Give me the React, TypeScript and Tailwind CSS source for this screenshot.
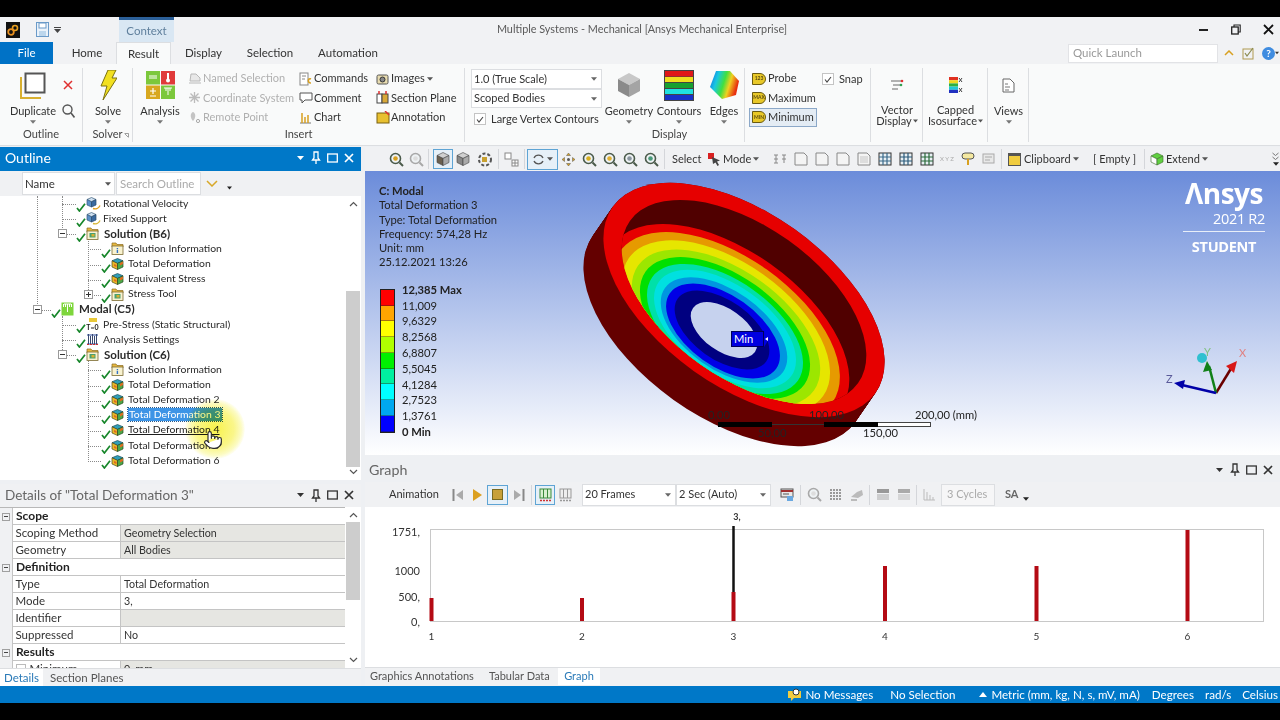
import React from "react";
import { Pointer } from "lucide-react";

const Caret = ({ c = "#555", w = 7 }: { c?: string; w?: number }) => (
  <svg width={w} height={4} viewBox="0 0 7 4" className="shrink-0"><path d="M0 0h7L3.5 4z" fill={c} /></svg>
);

const Check = () => (
  <svg width={10} height={9} viewBox="0 0 10 9" className="shrink-0 self-end mb-[-1px]"><path d="M1 5 L3.4 8 L9 .8" stroke="#17862a" strokeWidth={1.7} fill="none" /></svg>
);

const Cube = () => (
  <svg width={13} height={12} viewBox="0 0 13 12" className="shrink-0">
    <path d="M6.5 .5 12 2.8 6.5 5.4 1 2.8z" fill="#2f9fb8" stroke="#1d4a5a" strokeWidth=".7" />
    <path d="M1 2.8 6.5 5.4V11.5L1 9z" fill="#e8b828" stroke="#4a4a20" strokeWidth=".7" />
    <path d="M12 2.8 6.5 5.4V11.5L12 9z" fill="#4aa848" stroke="#2a4a20" strokeWidth=".7" />
    <path d="M9 5 12 3.5V6L9 7.5zM3 6 5.5 7V9L3 8z" fill="#e06a20" />
  </svg>
);

const Folder = ({ inner }: { inner: React.ReactNode }) => (
  <svg width={13} height={13} viewBox="0 0 13 13" className="shrink-0">
    <path d="M1 1h4l1 1.5h6V5H1z" fill="#e8b840" stroke="#8a6a20" strokeWidth=".7" />
    <rect x="1" y="4" width="11" height="8.5" fill="#f8f2d0" stroke="#7a6a30" strokeWidth=".8" />
    {inner}
  </svg>
);
const SolIcon = () => (
  <Folder inner={<><rect x="3.5" y="6" width="6" height="4.5" fill="#4aa070" /><rect x="5.5" y="7" width="3" height="2.5" fill="#d8b030" /></>} />
);
const InfoIcon = () => (
  <Folder inner={<><rect x="5.7" y="6" width="1.4" height="1.3" fill="#3070c8" /><rect x="5.7" y="8" width="1.4" height="3" fill="#3070c8" /></>} />
);
const RotIcon = ({ bottom = "#e0a020" }: { bottom?: string }) => (
  <svg width={15} height={13} viewBox="0 0 15 13" className="shrink-0 mr-[-2px]">
    <path d="M5.5 .5 10 2.5 5.5 4.8 1 2.5z" fill="#cfe0f0" stroke="#3a5a7a" strokeWidth=".7" />
    <path d="M1 2.5 5.5 4.8V10L1 8z" fill="#5a90c8" stroke="#3a5a7a" strokeWidth=".7" />
    <path d="M10 2.5 5.5 4.8V10L10 8z" fill="#3a6aa0" stroke="#2a4a6a" strokeWidth=".7" />
    <path d="M7 11.5c3 .8 6-.5 7-3" stroke={bottom} strokeWidth="1.4" fill="none" />
  </svg>
);
const PreIcon = () => (
  <span className="shrink-0 w-[13px] h-[13px] relative flex items-end justify-center text-[7px] leading-[7px] font-bold text-[#222]">
    <span className="absolute left-[3px] top-0 w-[8px] h-[4px] bg-[#e8c838]" />T=0
  </span>
);
const SettingsIcon = () => (
  <svg width={13} height={13} viewBox="0 0 13 13" className="shrink-0">
    <path d="M1 2h11M1 11h11" stroke="#2a4aa0" strokeWidth="1" />
    <path d="M2.5 1v10M6.5 1v10M10.5 1v10M4.5 3v8M8.5 3v8" stroke="#3a4a70" strokeWidth="1" />
    <path d="M1 11.5h11" stroke="#d03030" strokeWidth="1.2" strokeDasharray="2 1" />
  </svg>
);
const ModalIcon = () => (
  <svg width={13} height={14} viewBox="0 0 13 14" className="shrink-0">
    <rect x=".5" y=".5" width="12" height="13" fill="#7ed63c" />
    <path d="M2.5 2v3M4.5 2v3M6.5 2v8M8.5 2v3M10.5 2v3M3 2h7" stroke="#fff" strokeWidth="1" />
  </svg>
);

const levelPl = ["pl-[51px]", "pl-[76px]", "pl-[101px]"];
const connector = ["left-[37px] w-[14px]", "left-[62px] w-[14px]", "left-[88px] w-[13px]"];
const expander = ["left-[33px]", "left-[58px]", "left-[84px]"];

function Row({ level, icon, label, bold, exp, sel, hover }: { level: number; icon: React.ReactNode; label: string; bold?: boolean; exp?: string; sel?: boolean; hover?: boolean }) {
  return (
    <div className={`relative flex h-[15.125px] items-center whitespace-nowrap ${levelPl[level]}`}>
      <span className={`absolute top-[8px] border-t border-dotted border-[#8a8a8a] ${connector[level]}`} />
      {exp && (
        <span className={`absolute top-[3px] flex h-[9px] w-[9px] items-center justify-center border border-[#9a9a9a] bg-white text-[9px] leading-[7px] text-[#333] ${expander[level]}`}>
          {exp === "-" ? <span className="h-px w-[5px] bg-[#333]" /> : <span className="relative h-px w-[5px] bg-[#333]"><span className="absolute left-[2px] top-[-2px] h-[5px] w-px bg-[#333]" /></span>}
        </span>
      )}
      <Check />
      {icon}
      <span
        className={
          "-mt-px leading-[13px] " +
          (bold ? "ml-[5px] text-[11.5px] font-bold " : "ml-[4px] text-[10.4px] ") +
          (sel ? "bg-[#3d94e6] text-white outline outline-dotted outline-[#2a5a8a] px-px -mx-px " : "") +
          (hover ? "underline text-[#1c1c1c] " : "")
        }
      >
        {label}
      </span>
    </div>
  );
}

function Tree() {
  return (
    <div className="relative flex-1 overflow-hidden bg-white text-[#2a2a2a]">
      <span className="absolute left-[37px] top-0 h-[108px] border-l border-dotted border-[#8a8a8a]" />
      <span className="absolute left-[62px] top-0 h-[34px] border-l border-dotted border-[#8a8a8a]" />
      <span className="absolute left-[88px] top-[38px] h-[60px] border-l border-dotted border-[#8a8a8a]" />
      <span className="absolute left-[62px] top-[120px] h-[34px] border-l border-dotted border-[#8a8a8a]" />
      <span className="absolute left-[88px] top-[162px] h-[102px] border-l border-dotted border-[#8a8a8a]" />
      <Row level={1} icon={<RotIcon />} label="Rotational Velocity" />
      <Row level={1} icon={<RotIcon bottom="#d8b838" />} label="Fixed Support" />
      <Row level={1} exp="-" icon={<SolIcon />} label="Solution (B6)" bold />
      <Row level={2} icon={<InfoIcon />} label="Solution Information" />
      <Row level={2} icon={<Cube />} label="Total Deformation" />
      <Row level={2} icon={<Cube />} label="Equivalent Stress" />
      <Row level={2} exp="+" icon={<SolIcon />} label="Stress Tool" />
      <Row level={0} exp="-" icon={<ModalIcon />} label="Modal (C5)" bold />
      <Row level={1} icon={<PreIcon />} label="Pre-Stress (Static Structural)" />
      <Row level={1} icon={<SettingsIcon />} label="Analysis Settings" />
      <Row level={1} exp="-" icon={<SolIcon />} label="Solution (C6)" bold />
      <Row level={2} icon={<InfoIcon />} label="Solution Information" />
      <Row level={2} icon={<Cube />} label="Total Deformation" />
      <Row level={2} icon={<Cube />} label="Total Deformation 2" />
      <Row level={2} icon={<Cube />} label="Total Deformation 3" sel />
      <Row level={2} icon={<Cube />} label="Total Deformation 4" hover />
      <Row level={2} icon={<Cube />} label="Total Deformation 5" />
      <Row level={2} icon={<Cube />} label="Total Deformation 6" />
      <span className="pointer-events-none absolute left-[185px] top-[203px] h-[60px] w-[60px] rounded-full bg-[radial-gradient(circle,#f8f24a_0%,#faf68a_45%,#fcfbc4_62%,transparent_72%)] mix-blend-multiply" />
      <Pointer className="absolute left-[203px] top-[234px]" size={20} fill="#fff" stroke="#2a2a2a" strokeWidth={1.4} />
    </div>
  );
}

const PanelBtns = ({ c }: { c: string }) => (
  <div className="ml-[4px] flex items-center gap-[6px]" style={{ color: c }}>
    <Caret c={c} w={9} />
    <svg width={10} height={13} viewBox="0 0 10 13"><path d="M3 1h4v6l1.5 2h-7L3 7zM5 9v4" fill="none" stroke={c} strokeWidth="1.3" /></svg>
    <svg width={11} height={10} viewBox="0 0 11 10"><rect x=".7" y="1" width="9.6" height="8" fill="none" stroke={c} strokeWidth="1.3" /></svg>
    <svg width={10} height={10} viewBox="0 0 10 10"><path d="M1 1l8 8M9 1l-8 8" stroke={c} strokeWidth="1.7" /></svg>
  </div>
);

const Dots = ({ white }: { white?: boolean }) => (
  <div className={"ml-[6px] h-[7px] flex-1 bg-[length:2px_2px] " + (white ? "bg-[radial-gradient(#ffffff80_0.6px,transparent_0.7px)]" : "bg-[radial-gradient(#a8acb2_0.6px,transparent_0.7px)]")} />
);

function ScrollBar({ top, h }: { top: string; h: string }) {
  return (
    <div className="flex h-full w-[16px] shrink-0 flex-col items-center bg-white">
      <svg width={9} height={6} viewBox="0 0 9 6" className="mt-[5px]"><path d="M1 5l3.5-3.5L8 5" stroke="#555" strokeWidth="1.2" fill="none" /></svg>
      <div className="relative w-full flex-1">
        <div className={"absolute left-px right-px bg-[#cdcdcd] " + top + " " + h} />
      </div>
      <svg width={9} height={6} viewBox="0 0 9 6" className="mb-[5px]"><path d="M1 1l3.5 3.5L8 1" stroke="#555" strokeWidth="1.2" fill="none" /></svg>
    </div>
  );
}

function DRow({ name, value, head, grey, box }: { name: string; value?: string; head?: boolean; grey?: boolean; box?: boolean }) {
  if (head)
    return (
      <div className="flex h-[17px] shrink-0 items-center">
        <span className="flex w-[12px] justify-center">
          <span className="flex h-[8px] w-[8px] items-center justify-center border border-[#a0a0a0]"><span className="h-px w-[4px] bg-[#444]" /></span>
        </span>
        <div className="flex h-full flex-1 items-center border-b border-l border-[#c4c4c4] bg-white pl-[3px] text-[12px] font-bold text-[#222]">{name}</div>
      </div>
    );
  return (
    <div className="flex h-[17px] shrink-0 items-stretch pl-[12px]">
      <div className="flex w-[108px] items-center border-b border-l border-[#c4c4c4] bg-white pl-[2.5px] text-[11.5px]">
        {box && <span className="mr-[4px] h-[10px] w-[10px] shrink-0 border border-[#bbb]" />}
        {name}
      </div>
      <div className={"flex flex-1 items-center border-b border-l border-[#c4c4c4] pl-[3px] pt-px text-[10.7px] " + (grey ? "bg-[#e6e6e2]" : "bg-white")}>{value}</div>
    </div>
  );
}

function Details() {
  return (
    <div className="flex h-[161px] w-[361px] bg-[#f0f1f3] text-[#333]">
      <div className="flex h-full w-[345px] flex-col overflow-hidden border-t border-[#b8b8b8] pr-0">
        <DRow name="Scope" head />
        <DRow name="Scoping Method" value="Geometry Selection" grey />
        <DRow name="Geometry" value="All Bodies" grey />
        <DRow name="Definition" head />
        <DRow name="Type" value="Total Deformation" />
        <DRow name="Mode" value="3," />
        <DRow name="Identifier" value="" grey />
        <DRow name="Suppressed" value="No" />
        <DRow name="Results" head />
        <DRow name="Minimum" value="0, mm" grey box />
      </div>
      <ScrollBar top="top-[4px]" h="h-[78px]" />
    </div>
  );
}

const Big = ({ icon, label, caret = true, w }: { icon: React.ReactNode; label: React.ReactNode; caret?: boolean; w: string }) => (
  <div className={"flex shrink-0 flex-col items-center " + w}>
    <div className="flex h-[34px] items-center justify-center">{icon}</div>
    <div className="mt-[2px] whitespace-nowrap text-center leading-[14px]">{label}</div>
    {caret && <div className="mt-[2px]"><Caret w={6} c="#777" /></div>}
  </div>
);

const Group = ({ w, label, children }: { w: string; label?: React.ReactNode; children: React.ReactNode }) => (
  <div className={"flex h-[74px] shrink-0 flex-col border-r border-[#dcdee1] " + w}>
    <div className="flex h-[59px]">{children}</div>
    {label && <div className="text-center leading-[13px] text-[#444]">{label}</div>}
  </div>
);

const RItem = ({ icon, label, grey }: { icon: React.ReactNode; label: React.ReactNode; grey?: boolean }) => (
  <div className={"flex h-[20px] items-center gap-[1px] whitespace-nowrap " + (grey ? "text-[#b0b0b0]" : "")}>
    <span className="flex w-[15px] justify-center">{icon}</span>
    {label}
  </div>
);

const Dropdown = ({ label, w, h = "h-[19px]" }: { label: string; w: string; h?: string }) => (
  <div className={"flex items-center justify-between border border-[#dcdee1] bg-white pl-[2px] pr-[4px] whitespace-nowrap " + w + " " + h}>
    <span>{label}</span>
    <Caret w={6} c="#666" />
  </div>
);

const CheckBox = ({ size = "h-[12px] w-[12px]" }: { size?: string }) => (
  <span className={"flex shrink-0 items-center justify-center border border-[#c4c4c4] bg-white " + size}>
    <svg width={8} height={7} viewBox="0 0 8 7"><path d="M1 3.5l2 2.5L7 1" stroke="#444" strokeWidth="1.1" fill="none" /></svg>
  </span>
);

const PBadge = ({ t }: { t: string }) => (
  <span className="flex h-[12px] w-[14px] items-center justify-center rounded-r-full border border-[#6a5a10] bg-[#e8c828] text-[5px] font-bold leading-none text-[#5a4a10]">{t}</span>
);

function Ribbon() {
  return (
    <div className="flex h-[82px] shrink-0 border-b border-[#dcdee1] bg-[#f9fafa] pt-[4px] text-[#333]">
      <Group w="w-[83px]" label="Outline">
        <Big
          w="ml-[5px] w-[56px]"
          label="Duplicate"
          icon={
            <svg width={26} height={27} viewBox="0 0 26 27">
              <path d="M1 5v21h20" fill="none" stroke="#d8b030" strokeWidth="2" />
              <rect x="5.5" y="1.5" width="19" height="19" fill="#fff" stroke="#555" strokeWidth="2" />
            </svg>
          }
        />
        <div className="flex w-[14px] flex-col items-center">
          <div className="flex h-[34px] items-center">
            <svg width={10} height={10} viewBox="0 0 10 10"><path d="M1 1l8 8M9 1l-8 8" stroke="#e03030" strokeWidth="1.5" /></svg>
          </div>
          <svg className="mt-[2px]" width={13} height={14} viewBox="0 0 13 14"><circle cx="5.5" cy="5.5" r="4.5" fill="none" stroke="#555" strokeWidth="1.4" /><path d="M9 9l3.5 4.5" stroke="#555" strokeWidth="1.6" /></svg>
        </div>
      </Group>
      <Group
        w="w-[50px]"
        label={
          <span className="flex items-center justify-center gap-px pl-[6px]">
            Solver
            <svg width={5} height={5} viewBox="0 0 5 5" className="mt-[3px]"><path d="M.5 .5h4v4M1 1l3 3" stroke="#777" fill="none" strokeWidth=".7" /></svg>
          </span>
        }
      >
        <Big
          w="w-[50px]"
          label="Solve"
          icon={<svg width={17} height={30} viewBox="0 0 17 30"><path d="M8 0h8l-4 8h5L3 30l4-14H1z" fill="#f2e020" stroke="#7a7010" strokeWidth="1" /></svg>}
        />
      </Group>
      <Group w="w-[332px]" label="Insert">
        <Big
          w="w-[54px]"
          label="Analysis"
          icon={
            <svg width={29} height={28} viewBox="0 0 29 28">
              <rect width="14" height="13.500" fill="#7cc83c" />
              <rect x="15" width="14" height="13.500" fill="#e03a3a" />
              <rect y="14.500" width="14" height="13.500" fill="#d8a820" />
              <rect x="15" y="14.500" width="14" height="13.500" fill="#7cc83c" />
              <path d="M3 5h8M3 7h8" stroke="#fff" strokeWidth="1" />
              <path d="M22 2v7" stroke="#fff" strokeWidth="2" />
              <circle cx="22" cy="9.500" r="2" fill="#fff" />
              <path d="M7 17v6M4 20h6M4 25h6" stroke="#fff" strokeWidth="1.200" />
              <path d="M18 17h8M20 17v3M22 17v7M24 17v3" stroke="#fff" strokeWidth="1" />
            </svg>
          }
        />
        <div className="mt-px flex w-[111px] flex-col">
          <RItem grey label="Named Selection" icon={<svg width={14} height={13} viewBox="0 0 14 13"><path d="M3 2h5l4 4v3H2zM1 11h12" stroke="#b8b8b8" fill="#e8e8e8" /></svg>} />
          <RItem grey label="Coordinate System" icon={<svg width={13} height={13} viewBox="0 0 13 13"><path d="M6.500 1v11M1 6.500h11M2.500 2.500l8 8M10.500 2.500l-8 8" stroke="#bbb" strokeWidth="1.3" /></svg>} />
          <RItem grey label="Remote Point" icon={<svg width={13} height={13} viewBox="0 0 13 13"><path d="M5 1c3 1 3 6 0 9-3-3-3-8 0-9z" fill="#c4c4c4" /><circle cx="10" cy="10" r="1.600" fill="none" stroke="#aaa" /></svg>} />
        </div>
        <div className="mt-px flex w-[77px] flex-col">
          <RItem label="Commands" icon={<svg width={13} height={14} viewBox="0 0 13 14"><rect x="1" y="1" width="8" height="12" fill="#fff" stroke="#888" /><path d="M3 4h4M3 7h3" stroke="#888" /><path d="M12 7c-3-1.500-4 4 0 4" stroke="#d8a020" strokeWidth="1.600" fill="none" /></svg>} />
          <RItem label="Comment" icon={<svg width={14} height={13} viewBox="0 0 14 13"><path d="M1 2h12v7H6l-3 3V9H1z" fill="#fff" stroke="#555" /></svg>} />
          <RItem label="Chart" icon={<svg width={13} height={13} viewBox="0 0 13 13"><path d="M1 12h11" stroke="#777" /><path d="M3 12V2M6 12V6M9 12V4" stroke="#d8a020" strokeWidth="1.500" /></svg>} />
        </div>
        <div className="mt-px flex flex-col">
          <RItem label={<span className="flex items-center gap-[2px]">Images<Caret w={6} /></span>} icon={<svg width={13} height={12} viewBox="0 0 13 12"><rect x="1" y="2" width="11" height="9" rx="1.500" fill="#e8dcb0" stroke="#555" /><circle cx="6.500" cy="6.500" r="2.500" fill="#888" stroke="#333" /></svg>} />
          <RItem label="Section Plane" icon={<svg width={13} height={13} viewBox="0 0 13 13"><rect x="1" y="3" width="5" height="9" fill="#fff" stroke="#444" /><rect x="6" y="3" width="6" height="9" fill="#d8a838" stroke="#444" /><path d="M3 0v3M10 0v3" stroke="#e03030" strokeWidth="1.500" /></svg>} />
          <RItem label="Annotation" icon={<svg width={14} height={13} viewBox="0 0 14 13"><rect x="1" y="2" width="12" height="10" fill="#e8c030" stroke="#7a6010" /><path d="M9 0l4 4" stroke="#e03030" strokeWidth="1.500" /></svg>} />
        </div>
      </Group>
      <div className="flex h-[74px] w-[280px] shrink-0 border-r border-[#dcdee1]">
        <div className="ml-[6px] mt-px flex w-[134px] flex-col">
          <Dropdown label="1.0 (True Scale)" w="w-[131px]" h="h-[20px]" />
          <Dropdown label="Scoped Bodies" w="w-[131px]" />
          <div className="mt-[1px] flex h-[20px] items-center gap-[5px] whitespace-nowrap pl-[3px]"><CheckBox />Large Vertex Contours</div>
        </div>
        <div className="flex flex-col">
          <div className="flex h-[59px]">
            <Big
              w="w-[50px]"
              label="Geometry"
              icon={<svg width={24} height={26} viewBox="0 0 24 26"><path d="M12 1 23 7 12 13 1 7z" fill="#c8c8c8" /><path d="M1 7l11 6v12L1 19z" fill="#8a8a8a" /><path d="M23 7 12 13v12l11-6z" fill="#a4a4a4" /></svg>}
            />
            <Big
              w="w-[50px]"
              label="Contours"
              icon={
                <svg width={30} height={31} viewBox="0 0 30 31">
                  <rect width="30" height="31" fill="#444" />
                  <rect x="1" y="1" width="28" height="5.500" fill="#e01818" />
                  <rect x="1" y="7" width="28" height="5" fill="#f0e020" />
                  <rect x="1" y="13" width="28" height="5" fill="#18a030" />
                  <rect x="1" y="19" width="28" height="5" fill="#20e0e0" />
                  <rect x="1" y="25" width="28" height="5" fill="#1830c8" />
                </svg>
              }
            />
            <Big
              w="w-[40px]"
              label="Edges"
              icon={
                <svg width={30} height={28} viewBox="0 0 30 28">
                  <defs><linearGradient id="eg" x1="0" x2="1" y1="0" y2=".3"><stop offset="0" stopColor="#1060e8" /><stop offset=".3" stopColor="#18c8e0" /><stop offset=".55" stopColor="#40e040" /><stop offset=".75" stopColor="#f0d020" /><stop offset="1" stopColor="#e83010" /></linearGradient></defs>
                  <path d="M7 0h14l9 10-3 14-14 4L1 16z" fill="url(#eg)" />
                </svg>
              }
            />
          </div>
          <div className="pr-[9px] text-center leading-[13px] text-[#444]">Display</div>
        </div>
      </div>
      <Group w="w-[126px]">
        <div className="ml-[4px] mt-px flex w-[68px] flex-col">
          <div className="flex h-[20px] items-center gap-[2px] pl-[3px]"><PBadge t="123" />Probe</div>
          <div className="flex h-[20px] items-center gap-[2px] pl-[3px]"><PBadge t="MAX" />Maximum</div>
          <div className="flex h-[20px] items-center gap-[2px] whitespace-nowrap border border-[#8ca8c8] bg-[#e4ecf4] pl-[2px]"><PBadge t="MIN" />Minimum</div>
        </div>
        <div className="ml-[5px] mt-px flex h-[20px] items-center gap-[5px]"><CheckBox />Snap</div>
      </Group>
      <Group w="w-[52px]">
        <Big
          w="w-[52px]"
          caret={false}
          label={<><div className="leading-[12px]">Vector</div><div className="flex items-center justify-center gap-[1px] leading-[10px]">Display<Caret w={5} /></div></>}
          icon={<svg width={14} height={12} viewBox="0 0 14 12"><path d="M1 2h11M3 6h8M2 10h6" stroke="#999" strokeWidth="1.300" /><circle cx="12" cy="2" r="1.300" fill="#e03030" /><circle cx="11" cy="6" r="1.300" fill="#30a050" /></svg>}
        />
      </Group>
      <Group w="w-[65px]">
        <Big
          w="w-[65px]"
          caret={false}
          label={<><div className="leading-[12px]">Capped</div><div className="flex items-center justify-center gap-[1px] leading-[10px]">Isosurface<Caret w={5} /></div></>}
          icon={<svg width={14} height={16} viewBox="0 0 14 16"><rect width="9" height="3.200" fill="#e03020" /><rect y="3.200" width="9" height="3.200" fill="#f0d820" /><rect y="6.400" width="9" height="3.200" fill="#30b040" /><rect y="9.600" width="9" height="3.200" fill="#20c8d8" /><rect y="12.800" width="9" height="3.200" fill="#2030c0" /><path d="M10 1l3 4M13 1l-3 4M10 11l3 4M13 11l-3 4" stroke="#444" /></svg>}
        />
      </Group>
      <Group w="w-[41px]">
        <Big
          w="w-[41px]"
          label="Views"
          icon={<svg width={13} height={15} viewBox="0 0 13 15"><path d="M1 1h7l4 4v9H1z" fill="#fff" stroke="#666" /><path d="M3 6h3M3 9h5M3 12h4" stroke="#777" /></svg>}
        />
      </Group>
    </div>
  );
}

const Tb = ({ children, w = "w-[21px]", active }: { children?: React.ReactNode; w?: string; active?: boolean }) => (
  <span className={"flex h-[20px] shrink-0 items-center justify-center " + w + (active ? " border border-[#5ea4d4] bg-[#e6f0f8]" : "")}>{children}</span>
);
const Sep = () => <span className="mx-[2px] h-[20px] w-px shrink-0 bg-[#d4d6da]" />;
const Mag = ({ c = "#d8a020", g }: { c?: string; g?: boolean }) => (
  <svg width={15} height={15} viewBox="0 0 15 15"><circle cx="6.500" cy="6.500" r="5" fill="#eef2f4" stroke={g ? "#a8a8a8" : "#4a5a4a"} strokeWidth="1.600" /><circle cx="6.500" cy="6.500" r="2.300" fill={g ? "#ddd" : c} /><path d="M10.500 10.500l3.500 3.500" stroke={g ? "#a8a8a8" : "#4a5a4a"} strokeWidth="2" /></svg>
);
const SmallCube = ({ c = "#888", o = "#444" }: { c?: string; o?: string }) => (
  <svg width={14} height={14} viewBox="0 0 14 14"><path d="M7 .5 13 3.500 7 6.500 1 3.500z" fill="#d0d0d0" stroke={o} strokeWidth=".6" /><path d="M1 3.500 7 6.500V13.500L1 10.500z" fill={c} stroke={o} strokeWidth=".6" /><path d="M13 3.500 7 6.500V13.500L13 10.500z" fill="#aaa" stroke={o} strokeWidth=".6" /></svg>
);
const Page = ({ c = "#c8c8c8", o = "#888" }: { c?: string; o?: string }) => (
  <svg width={14} height={14} viewBox="0 0 14 14"><path d="M1 1h9l3 3v9H1z" fill="#f4f4f4" stroke={o} /><rect x="3" y="4" width="8" height="7" fill={c} /></svg>
);
const Grid = ({ c = "#3a6a8a" }: { c?: string }) => (
  <svg width={14} height={14} viewBox="0 0 14 14"><rect x="1" y="1" width="12" height="12" fill="#e8f0f4" stroke="#333" /><path d="M1 5h12M1 9h12M5 1v12M9 1v12" stroke={c} strokeWidth="1.200" /></svg>
);

function ViewToolbar() {
  return (
    <div className="flex h-[24px] shrink-0 items-center whitespace-nowrap bg-[#f0f1f3] text-[#333]">
      <span className="ml-[10px] mr-[8px] h-[18px] w-[3px] bg-[radial-gradient(#a8acb2_0.6px,transparent_0.7px)] bg-[length:2px_2px]" />
      <Tb w="w-[20px]"><Mag /></Tb>
      <Tb w="w-[20px]"><Mag g /></Tb>
      <Sep />
      <span className="w-[2px]" />
      <Tb w="w-[20px]" active><SmallCube c="#6a6050" /></Tb>
      <Tb w="w-[20px]"><SmallCube /></Tb>
      <Tb w="w-[23px]"><svg width={16} height={15} viewBox="0 0 16 15"><circle cx="8" cy="7.500" r="6" fill="none" stroke="#555" strokeDasharray="3 2" strokeWidth="2" /><rect x="5" y="5" width="5" height="5" fill="#c8a030" /></svg></Tb>
      <Sep />
      <Tb><svg width={15} height={15} viewBox="0 0 15 15"><rect x="1" y="1" width="6" height="6" fill="#fff" stroke="#888" /><rect x="8" y="8" width="6" height="6" fill="#fff" stroke="#888" /><path d="M11 8v6M8 11h6" stroke="#888" /></svg></Tb>
      <Sep />
      <span className="flex h-[21px] w-[31px] shrink-0 items-center justify-center gap-[2px] border border-[#5ea4d4] bg-[#e6f0f8]">
        <svg width={13} height={13} viewBox="0 0 13 13"><path d="M2 5a5 5 0 0 1 9 0M11 8a5 5 0 0 1-9 0" fill="none" stroke="#555" strokeWidth="1.300" /></svg>
        <Caret w={6} />
      </span>
      <Tb><svg width={15} height={15} viewBox="0 0 15 15"><path d="M7.500 1l2 2.500h-4zM7.500 14l2-2.500h-4zM1 7.500l2.500-2v4zM14 7.500l-2.500-2v4z" fill="#d8a020" stroke="#555" strokeWidth=".5" /><circle cx="7.500" cy="7.500" r="1.500" fill="#555" /></svg></Tb>
      <Tb w="w-[21px]"><Mag c="#d8b020" /></Tb>
      <Tb w="w-[20.5px]"><Mag c="#e0b030" /></Tb>
      <Tb w="w-[20.5px]"><Mag c="#8a96a0" /></Tb>
      <Tb w="w-[21px]"><Mag c="#4a9a7a" /></Tb>
      <Sep />
      <span className="ml-[5px] w-[35px]">Select</span>
      <span className="flex w-[14px] items-center">
        <svg width={14} height={13} viewBox="0 0 14 13"><rect x="1" y="0" width="6" height="6" fill="#d82020" /><path d="M5 4l8 3.500-3 1 2 3.500-1.500 1-2-3.500L6 11z" fill="#444" /></svg>
      </span>
      <span className="ml-[2px] flex w-[46px] items-center gap-[2px]">Mode<Caret w={6} /></span>
      <Tb><svg width={14} height={13} viewBox="0 0 14 13"><path d="M1 2h4M1 6h4M1 10h4M9 2h4M9 6h4M3 2v8M11 2v8" stroke="#888" /></svg></Tb>
      <Tb><Page c="#f4f4f4" /></Tb>
      <Tb><Page c="#f4f4f4" /></Tb>
      <Tb><Page c="#f4f4f4" /></Tb>
      <Tb><Page c="#ddd" /></Tb>
      <Tb><Grid /></Tb>
      <Tb><Grid c="#2a5a7a" /></Tb>
      <Tb><Grid c="#2a6a3a" /></Tb>
      <Tb w="w-[20px]"><span className="text-[6px] leading-none text-[#aaa]">X Y Z</span></Tb>
      <Tb><svg width={14} height={14} viewBox="0 0 14 14"><rect x="1" y="1" width="12" height="6" rx="3" fill="#f4e8a0" stroke="#555" /><path d="M7 7v6" stroke="#d8a020" strokeWidth="2" /></svg></Tb>
      <Tb><svg width={14} height={14} viewBox="0 0 14 14"><rect x="1" y="2" width="11" height="9" fill="#e8e8e8" stroke="#aaa" /><path d="M3 5h7M3 8h5" stroke="#aaa" /></svg></Tb>
      <Sep />
      <span className="ml-[4px] mr-[3px] h-[13px] w-[13px] shrink-0 border border-[#555] border-t-[3px] bg-[#f0cc40]" />
      <span className="flex w-[57px] items-center gap-[2px]">Clipboard<Caret w={6} /></span>
      <span className="ml-[12px] mr-[5px] w-[44px]">[ Empty ]</span>
      <Sep />
      <span className="ml-[3px] mr-[2px]"><svg width={14} height={14} viewBox="0 0 14 14"><path d="M7 1 13 4 7 7 1 4z" fill="#60d040" stroke="#3a6a2a" strokeWidth=".6" /><path d="M1 4 7 7V13L1 10z" fill="#fff" stroke="#3a6a2a" strokeWidth=".6" /><path d="M13 4 7 7V13L13 10z" fill="#60d040" stroke="#3a6a2a" strokeWidth=".6" /></svg></span>
      <span className="flex items-center gap-[2px]">Extend<Caret w={6} /></span>
      <div className="ml-auto mr-[1px] flex flex-col items-center gap-[2px]">
        <svg width={7} height={8} viewBox="0 0 7 8"><path d="M.5 1l3 2.500 3-2.500M.5 5l3 2.500 3-2.500" stroke="#777" fill="none" /></svg>
        <Caret w={6} c="#222" />
      </div>
    </div>
  );
}

const bands: [number, number, number, string][] = [
  [0.87, 727, 326, "#e60000"],
  [0.81, 726, 327, "#e69a00"],
  [0.74, 726, 327, "#e6e600"],
  [0.67, 726, 328, "#9ce600"],
  [0.605, 725, 328, "#00e000"],
  [0.555, 725, 329, "#00e0a8"],
  [0.505, 725, 329, "#00e0e0"],
  [0.45, 724, 330, "#0096e0"],
  [0.405, 723, 331, "#0000e6"],
  [0.337, 722, 330, "#000080"],
];

function Model() {
  const rot = (x: number, y: number) => `rotate(35.4 ${x} ${y})`;
  const A = 161;
  const B = 87;
  const steps = Array.from({ length: 30 }, (_, i) => i / 29);
  return (
    <svg width={915} height={284} viewBox="365 171 915 284" className="absolute left-0 top-0">
      <defs>
        <clipPath id="floor"><ellipse cx={744} cy={302} rx={140} ry={76} transform={rot(744, 302)} /></clipPath>
      </defs>
      {steps.map((t) => (
        <ellipse key={t} cx={744 - 20 * t} cy={300 + 29 * t} rx={A} ry={B} transform={rot(744 - 20 * t, 300 + 29 * t)} fill="#640000" />
      ))}
      <ellipse cx={744} cy={300} rx={A} ry={B} transform={rot(744, 300)} fill="#e60000" />
      <ellipse cx={744} cy={302} rx={140} ry={76} transform={rot(744, 302)} fill="#500000" />
      <g clipPath="url(#floor)">
        {bands.map(([s, x, y, c]) => (
          <ellipse key={c} cx={x} cy={y} rx={A * s} ry={B * s} transform={rot(x, y)} fill={c} />
        ))}
        <ellipse cx={724} cy={330} rx={38} ry={21} transform={rot(724, 330)} fill="#c6d2ee" />
      </g>
    </svg>
  );
}

function ScaleBar() {
  return (
    <>
      <span className="absolute left-[343px] top-[238px] leading-none">0,00</span>
      <span className="absolute left-[444px] top-[238px] leading-none">100,00</span>
      <span className="absolute left-[550px] top-[238px] leading-none">200,00 (mm)</span>
      <span className="absolute left-[393px] top-[256px] leading-none">50,00</span>
      <span className="absolute left-[498px] top-[256px] leading-none">150,00</span>
      <div className="absolute left-[353px] top-[251px] flex h-[5px] w-[213px] items-center">
        <span className="h-[5px] w-[54px] bg-black" />
        <span className="h-[1px] w-[52px] bg-[#333]" />
        <span className="h-[5px] w-[54px] bg-black" />
        <span className="h-[5px] w-[53px] border-y border-r border-[#444] bg-white" />
      </div>
    </>
  );
}

const legendColors = ["#ff0000", "#ffa500", "#ffff00", "#b0ff00", "#00f000", "#00f0a0", "#00ffff", "#00a8f0", "#0000ff"];
const legendLabels = ["11,009", "9,6329", "8,2568", "6,8807", "5,5045", "4,1284", "2,7523", "1,3761"];

function Viewport() {
  return (
    <div className="relative h-[284px] shrink-0 overflow-hidden bg-[linear-gradient(#6b8cda,#ffffff)] pl-[14px] pt-[13px] text-[11.2px] text-[#222]">
      <Model />
      <div className="relative">
        <div className="font-bold leading-[14.3px]">C: Modal</div>
        <div className="leading-[14.3px]">Total Deformation 3</div>
        <div className="leading-[14.3px]">Type: Total Deformation</div>
        <div className="leading-[14.3px]">Frequency: 574,28 Hz</div>
        <div className="leading-[14.3px]">Unit: mm</div>
        <div className="leading-[14.3px]">25.12.2021 13:26</div>
        <div className="mt-[12px] flex">
          <div className="ml-px mt-[7px] flex h-[144px] w-[15px] flex-col border border-[#222]">
            {legendColors.map((c) => (
              <span key={c} className="flex-1 border-b border-[#2226]" style={{ backgroundColor: c }} />
            ))}
          </div>
          <div className="ml-[7px] flex flex-col">
            <div className="h-[15.800px] font-bold leading-[15.800px]">12,385 Max</div>
            {legendLabels.map((l) => (
              <div key={l} className="h-[15.800px] leading-[15.800px]">{l}</div>
            ))}
            <div className="h-[15.800px] font-bold leading-[15.800px]">0 Min</div>
          </div>
        </div>
      </div>
      <ScaleBar />
      <div className="absolute left-[366px] top-[160px] flex items-center">
        <span className="flex h-[16px] w-[33px] items-center border border-[#00005a] bg-[#0000e0] pl-[2px] text-white">Min</span>
        <svg width={6} height={16} viewBox="0 0 6 16"><path d="M0 0 5 8 0 16z" fill="#0000e0" /><path d="M1 8l3-2v4z" fill="#fff" /></svg>
      </div>
      <div className="absolute right-[15px] top-[6px] flex w-[82px] flex-col items-stretch text-white [font-family:'Open_Sans',sans-serif]">
        <div className="h-[32px] text-center text-[28px] font-bold leading-[32px] tracking-[-0.5px]">Λnsys</div>
        <div className="mt-[1px] text-right text-[14.5px] leading-[18px] tracking-[-0.3px]">2021 R2</div>
        <div className="mt-[3px] h-px bg-[#e8eef8]" />
        <div className="mt-[6px] text-center text-[14.5px] font-bold leading-[18px] tracking-[-0.3px]">STUDENT</div>
      </div>
      <svg width={90} height={65} viewBox="1160 345 90 65" className="absolute left-[795px] top-[174px]">
        <path d="M1216 393 1232 367" stroke="#6a0000" strokeWidth="2.500" />
        <path d="M1237 361 1226 366 1234 373z" fill="#d81818" />
        <path d="M1216 393 1209 366" stroke="#108018" strokeWidth="2.500" />
        <path d="M1207 361 1203 372 1212 370z" fill="#108018" />
        <circle cx="1202" cy="358" r="5" fill="#30c0d0" />
        <path d="M1216 393 1182 385" stroke="#0000a8" strokeWidth="2.500" />
        <path d="M1174 383 1185 380 1183 389z" fill="#0000a8" />
        <text x="1239" y="357" fontSize="11" fill="#e08080">X</text>
        <text x="1204" y="356" fontSize="11" fill="#80c080">Y</text>
        <text x="1166" y="383" fontSize="11" fill="#5a5a9a">Z</text>
      </svg>
    </div>
  );
}

function GraphToolbar() {
  return (
    <div className="flex h-[25px] shrink-0 items-center whitespace-nowrap bg-[#f0f1f3] text-[#333]">
      <span className="ml-[10px] mr-[11px] h-[18px] w-[3px] shrink-0 bg-[radial-gradient(#a8acb2_0.6px,transparent_0.7px)] bg-[length:2px_2px]" />
      <span className="w-[60px]">Animation</span>
      <Tb w="w-[18px]"><svg width={12} height={12} viewBox="0 0 12 12"><path d="M1.500 0v12" stroke="#888" strokeWidth="2" /><path d="M11 1v10L4 6z" fill="#aaa" /></svg></Tb>
      <Tb w="w-[20px]"><svg width={9} height={12} viewBox="0 0 9 12"><path d="M0 0v12l9-6z" fill="#dca020" /></svg></Tb>
      <Tb w="w-[21px]" active><span className="h-[11px] w-[11px] border border-[#7a6a20] bg-[#c8a038]" /></Tb>
      <Tb w="w-[21px]"><svg width={12} height={12} viewBox="0 0 12 12"><path d="M1 1v10l7-5z" fill="#aaa" /><path d="M10.500 0v12" stroke="#888" strokeWidth="2" /></svg></Tb>
      <Sep />
      <span className="ml-[1px]" />
      <Tb w="w-[20px]" active><svg width={13} height={14} viewBox="0 0 13 14"><rect x="1" y="1" width="11" height="9" fill="#d8f0d0" stroke="#3a8a3a" /><path d="M4.500 1v9M8.500 1v9" stroke="#3a8a3a" /><path d="M1 12.500h11" stroke="#d03030" strokeWidth="1.500" strokeDasharray="2 1" /></svg></Tb>
      <Tb w="w-[21px]"><svg width={13} height={14} viewBox="0 0 13 14"><rect x="1" y="1" width="11" height="9" fill="#eee" stroke="#999" /><path d="M4.500 1v9M8.500 1v9" stroke="#999" /><path d="M1 12.500h11" stroke="#999" strokeWidth="1.500" strokeDasharray="2 1" /></svg></Tb>
      <span className="ml-[6px]" />
      <Dropdown label="20 Frames" w="w-[94px]" h="h-[22px]" />
      <Dropdown label="2 Sec (Auto)" w="w-[95px]" h="h-[22px]" />
      <span className="ml-[5px]" />
      <Tb w="w-[22px]"><svg width={14} height={14} viewBox="0 0 14 14"><rect x="1" y="1" width="12" height="8" fill="#e8e8e8" stroke="#555" /><path d="M1 3h12" stroke="#a03030" strokeWidth="2" /><rect x="7" y="8" width="6" height="5" fill="#6aa8e0" /><path d="M3 6h6" stroke="#555" /></svg></Tb>
      <Sep />
      <span className="ml-[1px]" />
      <Tb><Mag g /></Tb>
      <Tb><svg width={14} height={14} viewBox="0 0 14 14"><path d="M2 1v12M5 1v12M8 1v12M11 1v12" stroke="#999" strokeWidth="2" strokeDasharray="2 1" /></svg></Tb>
      <Tb><svg width={14} height={14} viewBox="0 0 14 14"><path d="M1 9l6-5 5-2 1 5-5 3z" fill="#bbb" /><path d="M1 12h6" stroke="#bbb" strokeWidth="2" /></svg></Tb>
      <Sep />
      <Tb><svg width={14} height={12} viewBox="0 0 14 12"><rect x="1" y="0" width="12" height="4" fill="#999" /><path d="M1 6h12M1 8h12M1 10h12" stroke="#aaa" strokeWidth="1" /></svg></Tb>
      <Tb><svg width={14} height={12} viewBox="0 0 14 12"><rect x="1" y="0" width="12" height="4" fill="#aaa" /><path d="M1 6h12M1 8h12M1 10h12" stroke="#bbb" strokeWidth="1" /></svg></Tb>
      <Sep />
      <Tb w="w-[20px]"><svg width={14} height={13} viewBox="0 0 14 13"><path d="M2 1v11M2 12h11M5 4v8M8 7v5M11 9v3" stroke="#bbb" /></svg></Tb>
      <span className="ml-[2px] flex h-[22px] w-[54px] items-center border border-[#dcdee1] bg-[#f6f6f7] pl-[5px] text-[#aaa]">3 Cycles</span>
      <span className="ml-[10px] font-bold text-[#666]">SA</span>
      <span className="ml-[4px] mt-[8px]"><Caret w={6} c="#222" /></span>
    </div>
  );
}

function Chart() {
  const xs = [431.5, 582, 733.5, 885, 1036.5, 1187.5];
  const tops = [598, 598, 592, 566, 566, 530];
  const labels: [string, number][] = [["1751,", 532], ["1000", 571], ["500,", 597], ["0,", 622]];
  return (
    <svg width={915} height={160} viewBox="365 507 915 160" className="block bg-white" fontSize="11" fill="#333" fontFamily="Lato, sans-serif">
      <rect x="430.500" y="529.500" width="833" height="92" fill="#fff" stroke="#c8c8c8" />
      {labels.map(([t, y]) => (
        <text key={t} x="420" y={y + 4} textAnchor="end">{t}</text>
      ))}
      <text x="737" y="520" textAnchor="middle" fontWeight="700" fontSize="9">3,</text>
      <path d="M733.500 526V592" stroke="#111" strokeWidth="2.500" />
      {xs.map((x, i) => (
        <g key={x}>
          <rect x={x - 2} y={tops[i]} width="4" height={621 - tops[i]} fill="#b40a14" />
          <text x={x} y={640} textAnchor="middle" fontSize="10">{i + 1}</text>
        </g>
      ))}
    </svg>
  );
}

const TabRow = ({ children }: { children: React.ReactNode }) => (
  <div className="flex flex-1 items-stretch border-t border-[#dcdee1] bg-[#f0f1f3] pb-px text-[#555]">{children}</div>
);

export default function App() {
  return (
    <div className="flex h-[720px] w-[1280px] flex-col overflow-hidden bg-black text-[11px] text-[#333] [font-family:Lato,sans-serif]">
      <div className="h-[17px] shrink-0" />
      {/* Title row */}
      <div className="flex h-[25px] shrink-0 items-center bg-[#f1f2f4]">
        <span className="ml-[6px] flex h-[16px] w-[14px] items-center justify-center bg-[#111]">
          <svg width={12} height={12} viewBox="0 0 12 12"><circle cx="8" cy="4" r="2.500" fill="none" stroke="#e8a020" strokeWidth="1.600" /><circle cx="4" cy="8" r="2.800" fill="none" stroke="#e89020" strokeWidth="1.800" /></svg>
        </span>
        <svg className="ml-[16px]" width={13} height={15} viewBox="0 0 13 15"><rect x=".5" y=".5" width="12" height="14" fill="#eaf2fa" stroke="#6a9ac8" /><rect x="3" y="1" width="7" height="5" fill="#fff" stroke="#6a9ac8" /><rect x="3" y="9" width="7" height="5" fill="#bcd6ec" /></svg>
        <span className="ml-[5px] flex flex-col items-center gap-[1px]"><span className="h-px w-[7px] bg-[#444]" /><Caret w={7} c="#444" /></span>
        <div className="ml-[58px] flex h-full w-[55px] items-center justify-center border-t-[3px] border-[#2b5f98] bg-[#d9e7f3] text-[11.5px] text-[#5f7f9c]">Context</div>
        <div className="flex-1 pr-[89px] text-center text-[10.85px] text-[#5a5a5a]">Multiple Systems - Mechanical [Ansys Mechanical Enterprise]</div>
        <div className="flex items-center">
          <span className="h-[2px] w-[9px] bg-[#222]" />
          <svg className="ml-[23px]" width={10} height={11} viewBox="0 0 10 11"><rect x=".7" y="3" width="6.500" height="7" fill="none" stroke="#222" strokeWidth="1.300" /><path d="M3 3V1h6.200v7H7" fill="none" stroke="#222" strokeWidth="1.100" /></svg>
          <svg className="ml-[22px] mr-[6px]" width={11} height={11} viewBox="0 0 11 11"><path d="M1 1l9 9M10 1l-9 9" stroke="#111" strokeWidth="1.800" /></svg>
        </div>
      </div>
      {/* Tab row */}
      <div className="flex h-[22px] shrink-0 items-stretch bg-[#f1f2f4] text-[11.5px] text-[#333]">
        <div className="flex w-[53px] items-center justify-center bg-[#0072c6] text-white">File</div>
        <div className="flex w-[63px] items-center justify-center pl-[5px]">Home</div>
        <div className="flex w-[55px] items-center justify-center border-x border-t border-[#dcdee1] bg-[#f9fafa]">Result</div>
        <div className="flex w-[65px] items-center justify-center">Display</div>
        <div className="flex w-[68px] items-center justify-center">Selection</div>
        <div className="flex w-[88px] items-center justify-center">Automation</div>
        <div className="ml-auto mr-px flex items-center">
          <div className="flex h-[19px] w-[150px] items-center border border-[#e2e3e6] bg-white pl-[4px] text-[#999]">Quick Launch</div>
          <svg className="ml-[6px]" width={10} height={6} viewBox="0 0 10 6"><path d="M1 5l4-4 4 4" stroke="#d8a020" strokeWidth="1.500" fill="none" /></svg>
          <svg className="ml-[8px]" width={13} height={13} viewBox="0 0 13 13"><rect x="1" y="2" width="10" height="10" fill="none" stroke="#b09a50" /><path d="M3 6l2 3 6-8" stroke="#8a8a50" fill="none" strokeWidth="1.200" /></svg>
          <span className="ml-[7px] flex h-[13px] w-[13px] items-center justify-center rounded-full bg-[#3f8ce0] text-[10px] font-bold leading-none text-white">?</span>
          <Caret w={4} c="#333" />
        </div>
      </div>
      <Ribbon />
      {/* Main */}
      <div className="flex h-[540px] shrink-0 bg-[#eef0f3]">
        <div className="flex w-[365px] shrink-0 flex-col pt-px">
          <div className="flex h-[24px] w-[361px] shrink-0 items-center bg-[#0078c8] pb-[3px] pl-[5px] pr-[7px] text-white">
            <span className="text-[14px]">Outline</span>
            <Dots white />
            <PanelBtns c="#ffffff" />
          </div>
          <div className="flex h-[25px] w-[361px] shrink-0 items-center bg-[#f0f1f3]">
            <span className="ml-[9px] mr-[10px] h-[18px] w-[3px] bg-[radial-gradient(#a8acb2_0.6px,transparent_0.7px)] bg-[length:2px_2px]" />
            <div className="flex h-[23px] w-[93px] items-center justify-between border border-[#dcdee1] bg-white pl-[2px] pr-[3px] text-[11.5px]">Name<Caret w={6} /></div>
            <div className="ml-px flex h-[23px] w-[85px] items-center border border-[#dcdee1] bg-white pl-[3px] text-[11.5px] text-[#aaa]">Search Outline</div>
            <svg className="ml-[5px]" width={12} height={7} viewBox="0 0 12 7"><path d="M1 1l5 5 5-5" stroke="#d8a828" strokeWidth="1.500" fill="none" /></svg>
            <span className="ml-[9px] mt-[8px]"><Caret w={5} c="#222" /></span>
          </div>
          <div className="flex h-[284px] w-[361px] shrink-0">
            <Tree />
            <ScrollBar top="top-[84px]" h="h-[176px]" />
          </div>
          <div className="h-[4px] shrink-0" />
          <div className="flex h-[23px] w-[361px] shrink-0 items-center bg-[#f0f1f3] pb-px pl-[5px] pr-[7px] text-[#666]">
            <span className="whitespace-nowrap text-[13.5px]">Details of "Total Deformation 3"</span>
            <Dots />
            <PanelBtns c="#333333" />
          </div>
          <Details />
          <div className="flex w-[361px] flex-1 text-[11.5px]">
            <TabRow>
              <span className="flex w-[43px] items-center justify-center bg-white pb-[3px] text-[#2a7ab8]">Details</span>
              <span className="ml-[7px] flex items-center pb-[3px]">Section Planes</span>
            </TabRow>
          </div>
        </div>
        <div className="flex flex-1 flex-col pt-px">
          <ViewToolbar />
          <Viewport />
          <div className="h-[5px] shrink-0" />
          <div className="flex h-[22px] shrink-0 items-center pb-[3px] pl-[4px] pr-[7px] text-[#666]">
            <span className="text-[14.25px]">Graph</span>
            <Dots />
            <PanelBtns c="#333333" />
          </div>
          <GraphToolbar />
          <Chart />
          <TabRow>
            <span className="ml-[5px] w-[108px] flex items-center whitespace-nowrap">Graphics Annotations</span>
            <span className="ml-[11px] w-[63px] flex items-center whitespace-nowrap">Tabular Data</span>
            <span className="ml-[6px] flex w-[42px] items-center justify-center bg-white text-[#2a7ab8]">Graph</span>
          </TabRow>
        </div>
      </div>
      {/* Status bar */}
      <div className="flex h-[17px] shrink-0 items-center justify-end whitespace-nowrap bg-[#0078c8] pr-[2px] text-[11.6px] text-white">
        <svg width={15} height={14} viewBox="0 0 15 14"><path d="M1 3h13v7H7l-3 3V10H1z" fill="#f0cc40" /><circle cx="9" cy="4" r="3" fill="#fff" stroke="#333" /></svg>
        <span className="ml-[3px]">No Messages</span>
        <span className="ml-[17px]">No Selection</span>
        <svg className="ml-[24px]" width={8} height={5} viewBox="0 0 8 5"><path d="M0 5 4 0l4 5z" fill="#fff" /></svg>
        <span className="ml-[4px]">Metric (mm, kg, N, s, mV, mA)</span>
        <span className="ml-[12px]">Degrees</span>
        <span className="ml-[11px]">rad/s</span>
        <span className="ml-[11px]">Celsius</span>
      </div>
      <div className="flex-1" />
    </div>
  );
}
